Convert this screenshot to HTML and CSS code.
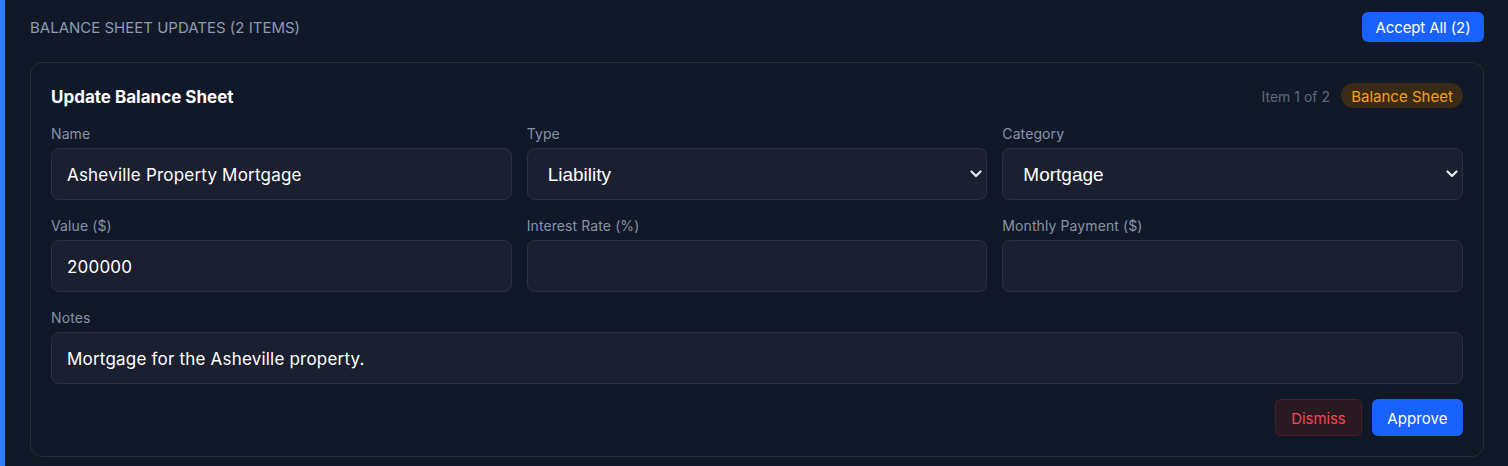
FILE: index.html
```html
<!DOCTYPE html>
<html>
<head>
<meta charset="utf-8">
<link rel="stylesheet" href="styles.css">
</head>
<body>
<div class="panel">
  <div class="panel-head">
    <div class="panel-title">BALANCE SHEET UPDATES (2 ITEMS)</div>
    <button class="btn btn-primary btn-accept">Accept All (2)</button>
  </div>
  <div class="card">
    <div class="card-head">
      <div class="card-title">Update Balance Sheet</div>
      <div class="card-meta">
        <span class="count">Item 1 of 2</span>
        <span class="badge">Balance Sheet</span>
      </div>
    </div>
    <div class="grid">
      <div class="field">
        <label class="label">Name</label>
        <input class="input" value="Asheville Property Mortgage">
      </div>
      <div class="field">
        <label class="label">Type</label>
        <div class="select-wrap">
          <select class="select"><option>Liability</option></select>
          <svg class="chev" width="12" height="8" viewBox="0 0 12 8"><path d="M1.5 1.5 L6 6 L10.5 1.5" fill="none" stroke="#e5e7eb" stroke-width="2.2" stroke-linecap="round" stroke-linejoin="round"/></svg>
        </div>
      </div>
      <div class="field">
        <label class="label">Category</label>
        <div class="select-wrap">
          <select class="select"><option>Mortgage</option></select>
          <svg class="chev" width="12" height="8" viewBox="0 0 12 8"><path d="M1.5 1.5 L6 6 L10.5 1.5" fill="none" stroke="#e5e7eb" stroke-width="2.2" stroke-linecap="round" stroke-linejoin="round"/></svg>
        </div>
      </div>
      <div class="field">
        <label class="label">Value ($)</label>
        <input class="input" value="200000">
      </div>
      <div class="field">
        <label class="label">Interest Rate (%)</label>
        <input class="input" value="">
      </div>
      <div class="field">
        <label class="label">Monthly Payment ($)</label>
        <input class="input" value="">
      </div>
      <div class="field field-full">
        <label class="label">Notes</label>
        <input class="input" value="Mortgage for the Asheville property.">
      </div>
    </div>
    <div class="actions">
      <button class="btn btn-dismiss">Dismiss</button>
      <button class="btn btn-primary btn-approve">Approve</button>
    </div>
  </div>
</div>
</body>
</html>
```
FILE: styles.css
```css
* { box-sizing: border-box; }
html, body { margin: 0; padding: 0; }
body {
  background: #111827;
  font-family: Inter, "Noto Sans", sans-serif;
  color: #e5e7eb;
  width: 1508px;
  height: 466px;
  overflow: hidden;
}
.panel {
  border-left: 5px solid #2f80ff;
  padding: 12px 24px 10px 25px;
  height: 466px;
}
.panel-head {
  display: flex;
  justify-content: space-between;
  align-items: center;
  height: 30px;
  margin-bottom: 20px;
}
.panel-title {
  font-size: 15px;
  color: #8d9bb2;
  letter-spacing: 0;
}
.btn {
  font-family: inherit;
  border: none;
  cursor: pointer;
  border-radius: 6px;
}
.btn-primary {
  background: #1a62ff;
  color: #ffffff;
}
.btn-accept {
  width: 122px;
  height: 30px;
  font-size: 15px;
  letter-spacing: -0.1px;
}
.card {
  border: 1px solid #252d3b;
  border-radius: 12px;
  padding: 20px;
  background: #111827;
}
.card-head {
  display: flex;
  justify-content: space-between;
  align-items: center;
  height: 25px;
  margin-bottom: 16px;
}
.card-title {
  font-size: 17px;
  font-weight: 700;
  color: #ffffff;
  letter-spacing: 0;
  padding-top: 2px;
}
.card-meta {
  display: flex;
  align-items: center;
  gap: 11px;
}
.count {
  font-size: 14px;
  color: #5b6a80;
  letter-spacing: 0;
  padding-top: 1px;
}
.badge {
  height: 25px;
  width: 122px;
  display: flex;
  align-items: center;
  justify-content: center;
  border-radius: 13px;
  background: #3a2b17;
  color: #f5a00b;
  font-size: 15px;
  letter-spacing: 0;
  padding-top: 1px;
}
.grid {
  display: grid;
  grid-template-columns: 1fr 1fr 1fr;
  column-gap: 15px;
  row-gap: 16px;
}
.field-full { grid-column: 1 / 4; }
.label {
  display: block;
  font-size: 14px;
  line-height: 20px;
  color: #8494ab;
  margin-bottom: 4px;
  letter-spacing: 0.1px;
}
.input, .select {
  display: block;
  width: 100%;
  height: 52px;
  background: #1b2030;
  border: 1px solid #2a3242;
  border-radius: 8px;
  color: #ffffff;
  font-family: inherit;
  font-size: 17px;
  padding: 2px 15px 0;
  outline: none;
  letter-spacing: 0.2px;
}
.select-wrap { position: relative; }
.select {
  -webkit-appearance: none;
  appearance: none;
  padding: 0 20px;
  font-family: "Liberation Sans", Arial, sans-serif;
  font-size: 19px;
  letter-spacing: 0;
}
.chev {
  position: absolute;
  right: 5px;
  top: 22px;
  pointer-events: none;
}
.actions {
  display: flex;
  justify-content: flex-end;
  gap: 10px;
  margin-top: 15px;
}
.btn-dismiss {
  width: 87px;
  height: 37px;
  background: #2a1823;
  border: 1px solid #4a1f2b;
  color: #ee4b53;
  font-size: 15px;
  letter-spacing: -0.1px;
  padding-top: 2px;
}
.btn-approve {
  width: 91px;
  height: 37px;
  font-size: 15px;
  letter-spacing: 0.1px;
  padding-top: 2px;
}
```
